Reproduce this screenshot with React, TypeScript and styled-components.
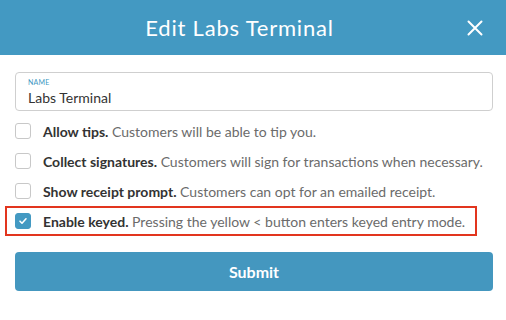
import React, { useState } from 'react';
import styled, { createGlobalStyle } from 'styled-components';

const GlobalStyle = createGlobalStyle`
  * {
    margin: 0;
    padding: 0;
    box-sizing: border-box;
  }
  body {
    font-family: 'Lato', 'Liberation Sans', sans-serif;
    background: #ffffff;
  }
`;

const Modal = styled.div`
  width: 506px;
  height: 320px;
  background: #ffffff;
`;

const Header = styled.div`
  height: 55px;
  background: #4399c2;
  display: flex;
  align-items: center;
  justify-content: center;
  padding-right: 27px;
  position: relative;
`;

const Title = styled.h1`
  color: #ffffff;
  font-size: 22px;
  font-weight: 400;
  letter-spacing: 0.8px;
`;

const Close = styled.button`
  position: absolute;
  right: 23px;
  top: 20px;
  width: 16px;
  height: 16px;
  border: none;
  background: none;
  cursor: pointer;
  display: flex;
`;

const Body = styled.div`
  padding: 17px 13px 0 15px;
  display: flex;
  flex-direction: column;
`;

const Field = styled.label`
  display: flex;
  flex-direction: column;
  height: 39px;
  border: 1px solid #cfcfcf;
  border-radius: 4px;
  padding: 5px 12px 0;
`;

const FieldLabel = styled.span`
  font-size: 7px;
  color: #3c97c2;
  letter-spacing: 0.2px;
  line-height: 9px;
`;

const FieldInput = styled.input`
  border: none;
  outline: none;
  font-family: inherit;
  font-size: 14px;
  color: #333;
  margin-top: 2px;
  background: transparent;
`;

const Options = styled.div`
  display: flex;
  flex-direction: column;
  margin-top: 5px;
`;

const Row = styled.div<{ $highlight?: boolean }>`
  display: flex;
  align-items: center;
  gap: 12px;
  height: 30px;
  ${p =>
    p.$highlight &&
    `
    margin: 0 16px 0 -10px;
    padding-left: 8px;
    border: 2px solid #e2351e;
  `}
`;

const Box = styled.span<{ $checked?: boolean }>`
  width: 16px;
  height: 16px;
  border-radius: 3px;
  border: 1px solid ${p => (p.$checked ? '#4399c2' : '#c8c8c8')};
  background: ${p => (p.$checked ? '#4399c2' : '#fff')};
  display: flex;
  align-items: center;
  justify-content: center;
  flex-shrink: 0;
`;

const Text = styled.span`
  font-size: 14px;
  color: #6b6b6b;
  white-space: nowrap;
  b {
    color: #333;
    font-weight: 700;
  }
`;

const Submit = styled.button`
  margin-top: 16px;
  height: 39px;
  width: 478px;
  border: none;
  border-radius: 4px;
  background: #4497bf;
  color: #fff;
  font-family: inherit;
  font-size: 16px;
  font-weight: 700;
  cursor: pointer;
`;

const options = [
  { title: 'Allow tips.', text: 'Customers will be able to tip you.', checked: false },
  { title: 'Collect signatures.', text: 'Customers will sign for transactions when necessary.', checked: false },
  { title: 'Show receipt prompt.', text: 'Customers can opt for an emailed receipt.', checked: false },
  { title: 'Enable keyed.', text: 'Pressing the yellow < button enters keyed entry mode.', checked: true },
];

export default function App() {
  const [name, setName] = useState('Labs Terminal');
  return (
    <>
      <GlobalStyle />
      <Modal>
        <Header>
          <Title>Edit Labs Terminal</Title>
          <Close aria-label="close">
            <svg width="16" height="16" viewBox="0 0 16 16">
              <path d="M1.5 1.5 L14.5 14.5 M14.5 1.5 L1.5 14.5" stroke="#fff" strokeWidth="2" strokeLinecap="round" />
            </svg>
          </Close>
        </Header>
        <Body>
          <Field>
            <FieldLabel>NAME</FieldLabel>
            <FieldInput value={name} onChange={e => setName(e.target.value)} />
          </Field>
          <Options>
            {options.map(o => (
              <Row key={o.title} $highlight={o.checked}>
                <Box $checked={o.checked}>
                  {o.checked && (
                    <svg width="10" height="10" viewBox="0 0 10 10">
                      <path d="M2 5.2 L4 7.2 L8 2.8" stroke="#fff" strokeWidth="1.6" fill="none" strokeLinecap="round" strokeLinejoin="round" />
                    </svg>
                  )}
                </Box>
                <Text>
                  <b>{o.title}</b> {o.text}
                </Text>
              </Row>
            ))}
          </Options>
          <Submit>Submit</Submit>
        </Body>
      </Modal>
    </>
  );
}
